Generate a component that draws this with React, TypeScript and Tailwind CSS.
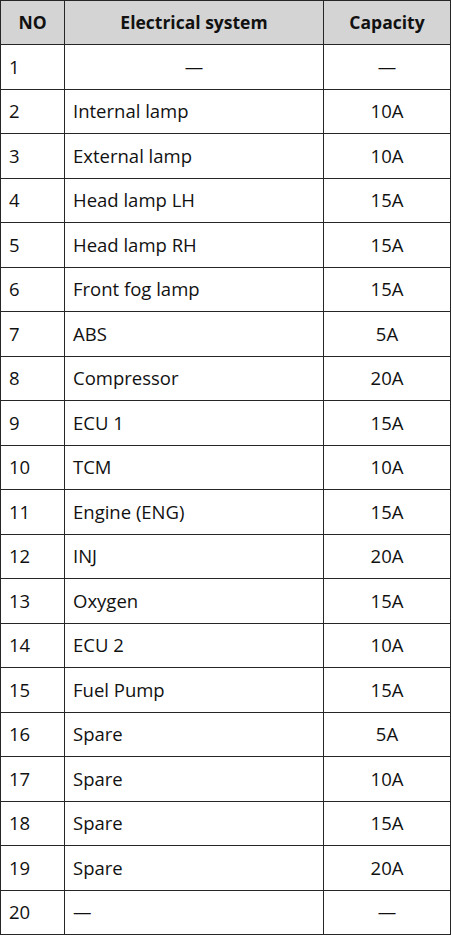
import React from "react";

const rows: [string, string, string, boolean?][] = [
  ["1", "—", "—", true],
  ["2", "Internal lamp", "10A"],
  ["3", "External lamp", "10A"],
  ["4", "Head lamp LH", "15A"],
  ["5", "Head lamp RH", "15A"],
  ["6", "Front fog lamp", "15A"],
  ["7", "ABS", "5A"],
  ["8", "Compressor", "20A"],
  ["9", "ECU 1", "15A"],
  ["10", "TCM", "10A"],
  ["11", "Engine (ENG)", "15A"],
  ["12", "INJ", "20A"],
  ["13", "Oxygen", "15A"],
  ["14", "ECU 2", "10A"],
  ["15", "Fuel Pump", "15A"],
  ["16", "Spare", "5A"],
  ["17", "Spare", "10A"],
  ["18", "Spare", "15A"],
  ["19", "Spare", "20A"],
  ["20", "—", "—"],
];

export default function App() {
  return (
    <div
      className="w-[451px] bg-white text-[#111] text-[18.5px]"
      style={{ fontFamily: '"Open Sans", "Noto Sans", sans-serif' }}
    >
      <div className="grid grid-cols-[64px_259px_127px] border-r border-b border-[#262626] w-[451px]">
        <div className="h-[44px] border-l border-t border-[#262626] bg-[#d4d4d4] flex items-center justify-center font-bold text-[17.5px]">
          NO
        </div>
        <div className="h-[44px] border-l border-t border-[#262626] bg-[#d4d4d4] flex items-center justify-center font-bold text-[17.5px]">
          Electrical system
        </div>
        <div className="h-[44px] border-l border-t border-[#262626] bg-[#d4d4d4] flex items-center justify-center font-bold text-[17.5px]">
          Capacity
        </div>
        {rows.map(([no, sys, cap, center]) => (
          <React.Fragment key={no}>
            <div className="h-[44.5px] border-l border-t border-[#262626] flex items-center pl-[8px]">
              {no}
            </div>
            <div
              className={
                center
                  ? "h-[44.5px] border-l border-t border-[#262626] flex items-center justify-center"
                  : "h-[44.5px] border-l border-t border-[#262626] flex items-center pl-[8px]"
              }
            >
              {sys}
            </div>
            <div className="h-[44.5px] border-l border-t border-[#262626] flex items-center justify-center">
              {cap}
            </div>
          </React.Fragment>
        ))}
      </div>
    </div>
  );
}
